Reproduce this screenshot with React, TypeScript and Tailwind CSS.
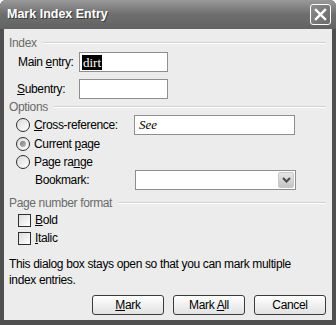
import React from 'react'

const font = { fontFamily: 'Tahoma, "Liberation Sans", Arial, sans-serif' }

function Header({ label }: { label: string }) {
  return (
    <div className="flex items-center h-[14px] pr-[1px]">
      <span className="text-[#6a6a6a] leading-none">{label}</span>
      <div className="flex-1 ml-[6px] h-[2px] border-t border-[#d2d2d2] border-b border-b-white" />
    </div>
  )
}

function Radio({ checked }: { checked?: boolean }) {
  return (
    <div className="w-[14px] h-[14px] rounded-full border border-[#2e2e2e] bg-gradient-to-br from-[#dcdcdc] to-white flex items-center justify-center">
      {checked && <div className="w-[6px] h-[6px] rounded-full bg-gradient-to-br from-[#7a7a7a] to-[#bdbdbd]" />}
    </div>
  )
}

function Check() {
  return <div className="w-[13px] h-[13px] border border-[#2e2e2e] bg-gradient-to-br from-[#dcdcdc] to-white" />
}

function Btn({ children }: { children: React.ReactNode }) {
  return (
    <button className="w-[72px] h-[20px] rounded-[3px] border border-[#3a3a3a] bg-gradient-to-b from-white to-[#e2e2e2] text-[12px] leading-none text-black tracking-[-0.35px]">
      {children}
    </button>
  )
}

export default function App() {
  return (
    <div className="w-[336px] h-[325px] bg-[#4f4f4f] rounded-t-[6px] flex flex-col text-[12px] text-black" style={font}>
      <div className="h-[29px] flex items-center pl-[7px] pr-[5px] rounded-t-[6px] bg-gradient-to-b from-[#9a9a9a] via-[#6e6e6e] to-[#636363]">
        <span className="flex-1 text-white font-bold text-[12.5px]" style={{ textShadow: '1px 1px 0 #3a3a3a' }}>
          Mark Index Entry
        </span>
        <div className="w-[21px] h-[21px] rounded-[3px] border border-white bg-gradient-to-br from-[#8c8c8c] to-[#6a6a6a] flex items-center justify-center">
          <svg width="13" height="13" viewBox="0 0 13 13">
            <path d="M2 2 L11 11 M11 2 L2 11" stroke="white" strokeWidth="2.4" strokeLinecap="square" />
          </svg>
        </div>
      </div>

      <div className="flex-1 mx-[4px] mb-[5px] bg-[#ececec] pl-[5px] pr-[5px] pt-[7px] flex flex-col tracking-[-0.35px]">
        <Header label="Index" />
        <div className="flex items-center mt-[2px] h-[20px]">
          <span className="w-[61px] ml-[9px]">Main <u>e</u>ntry:</span>
          <div className="w-[89px] h-[20px] border border-[#8e8e8e] bg-white flex items-center pl-[2px]">
            <span className="bg-black text-white leading-[15px] px-[1px] text-[13px] tracking-normal" style={{ fontFamily: '"Liberation Serif", serif' }}>dirt</span>
          </div>
        </div>
        <div className="flex items-center mt-[7px] h-[20px]">
          <span className="w-[62px] ml-[8px]"><u>S</u>ubentry:</span>
          <div className="w-[89px] h-[20px] border border-[#8e8e8e] bg-white" />
        </div>

        <div className="mt-[1px]">
          <Header label="Options" />
        </div>
        <div className="flex items-center h-[20px] mt-[1px]">
          <div className="ml-[7px]"><Radio /></div>
          <span className="ml-[4px] w-[100px]"><u>C</u>ross-reference:</span>
          <div className="w-[161px] h-[20px] border border-[#8e8e8e] bg-white flex items-center pl-[4px]">
            <span className="italic text-[13px] tracking-normal" style={{ fontFamily: '"Liberation Serif", serif' }}>See</span>
          </div>
        </div>
        <div className="flex items-center h-[18px]">
          <div className="ml-[7px]"><Radio checked /></div>
          <span className="ml-[4px]">Current <u>p</u>age</span>
        </div>
        <div className="flex items-center h-[18px]">
          <div className="ml-[7px]"><Radio /></div>
          <span className="ml-[4px]">Page ra<u>n</u>ge</span>
        </div>
        <div className="flex items-center h-[20px] mt-[-1px]">
          <span className="ml-[26px] w-[100px]">Bookmark:</span>
          <div className="w-[161px] h-[20px] border border-[#8e8e8e] bg-white flex justify-end items-center pr-[1px]">
            <div className="w-[16px] h-[16px] rounded-[2px] bg-gradient-to-b from-[#e6e6e6] to-[#c4c4c4] border border-[#c8c8c8] flex items-center justify-center">
              <svg width="9" height="6" viewBox="0 0 9 6">
                <path d="M1 1 L4.5 4.5 L8 1" stroke="#4a4a4a" strokeWidth="2" fill="none" />
              </svg>
            </div>
          </div>
        </div>

        <div className="mt-[6px]">
          <Header label="Page number format" />
        </div>
        <div className="flex items-center h-[18px] mt-[1px]">
          <div className="ml-[9px]"><Check /></div>
          <span className="ml-[4px]"><u>B</u>old</span>
        </div>
        <div className="flex items-center h-[18px]">
          <div className="ml-[9px]"><Check /></div>
          <span className="ml-[4px]"><u>I</u>talic</span>
        </div>

        <p className="mt-[9px] leading-[16px]">
          This dialog box stays open so that you can mark multiple
          <br />
          index entries.
        </p>

        <div className="flex justify-end gap-[9px] mt-[7px] pr-[1px]">
          <Btn><u>M</u>ark</Btn>
          <Btn>Mark <u>A</u>ll</Btn>
          <Btn>Cancel</Btn>
        </div>
      </div>
    </div>
  )
}
